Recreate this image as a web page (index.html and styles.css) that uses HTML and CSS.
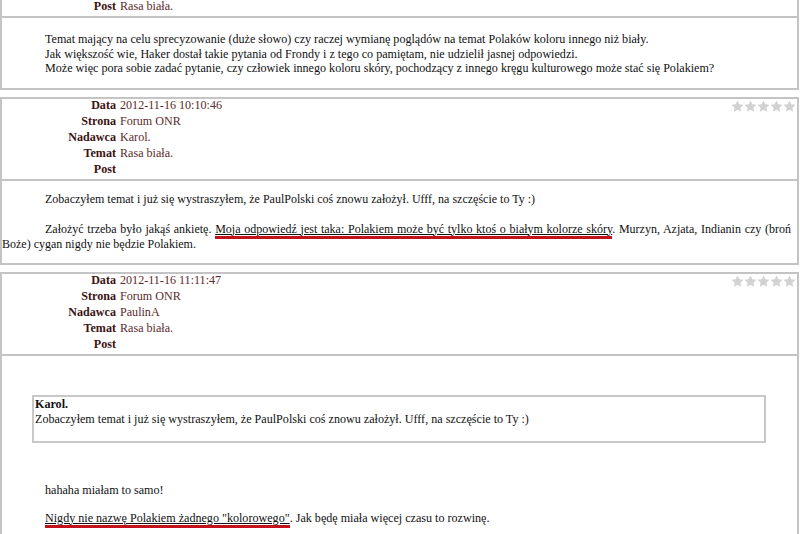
FILE: index.html
```html
<!DOCTYPE html>
<html lang="pl">
<head>
  <meta charset="UTF-8">
  <title>Rasa biała.</title>
  <link rel="stylesheet" href="styles.css">
</head>
<body>
  <div class="post cut">
    <div class="post-head">
      <div class="row"><span class="lbl">Post</span><span class="val">Rasa biała.</span></div>
    </div>
    <div class="post-body plain">
      Temat mający na celu sprecyzowanie (duże słowo) czy raczej wymianę poglądów na temat Polaków koloru innego niż biały.<br>
      Jak większość wie, Haker dostał takie pytania od Frondy i z tego co pamiętam, nie udzielił jasnej odpowiedzi.<br>
      Może więc pora sobie zadać pytanie, czy człowiek innego koloru skóry, pochodzący z innego kręgu kulturowego może stać się Polakiem?
    </div>
  </div>

  <div class="post">
    <div class="post-head">
      <div class="stars">
        <svg viewBox="0 0 13 12"><path d="M6.5 0.5l1.8 3.8 4.2.5-3.1 2.9.8 4.1-3.7-2.1-3.7 2.1.8-4.1L0.5 4.8l4.2-.5z"/></svg>
        <svg viewBox="0 0 13 12"><path d="M6.5 0.5l1.8 3.8 4.2.5-3.1 2.9.8 4.1-3.7-2.1-3.7 2.1.8-4.1L0.5 4.8l4.2-.5z"/></svg>
        <svg viewBox="0 0 13 12"><path d="M6.5 0.5l1.8 3.8 4.2.5-3.1 2.9.8 4.1-3.7-2.1-3.7 2.1.8-4.1L0.5 4.8l4.2-.5z"/></svg>
        <svg viewBox="0 0 13 12"><path d="M6.5 0.5l1.8 3.8 4.2.5-3.1 2.9.8 4.1-3.7-2.1-3.7 2.1.8-4.1L0.5 4.8l4.2-.5z"/></svg>
        <svg viewBox="0 0 13 12"><path d="M6.5 0.5l1.8 3.8 4.2.5-3.1 2.9.8 4.1-3.7-2.1-3.7 2.1.8-4.1L0.5 4.8l4.2-.5z"/></svg>
      </div>
      <div class="row"><span class="lbl">Data</span><span class="val">2012-11-16 10:10:46</span></div>
      <div class="row"><span class="lbl">Strona</span><span class="val">Forum ONR</span></div>
      <div class="row"><span class="lbl">Nadawca</span><span class="val">Karol.</span></div>
      <div class="row"><span class="lbl">Temat</span><span class="val">Rasa biała.</span></div>
      <div class="row"><span class="lbl">Post</span><span class="val"></span></div>
    </div>
    <div class="post-body">
      <p class="indent">Zobaczyłem temat i już się wystraszyłem, że PaulPolski coś znowu założył. Ufff, na szczęście to Ty :)</p>
      <p class="indent">Założyć trzeba było jakąś ankietę. <span class="mark">Moja odpowiedź jest taka: Polakiem może być tylko ktoś o białym kolorze skóry</span>. Murzyn, Azjata, Indianin czy (broń Boże) cygan nigdy nie będzie Polakiem.</p>
    </div>
  </div>

  <div class="post">
    <div class="post-head">
      <div class="stars">
        <svg viewBox="0 0 13 12"><path d="M6.5 0.5l1.8 3.8 4.2.5-3.1 2.9.8 4.1-3.7-2.1-3.7 2.1.8-4.1L0.5 4.8l4.2-.5z"/></svg>
        <svg viewBox="0 0 13 12"><path d="M6.5 0.5l1.8 3.8 4.2.5-3.1 2.9.8 4.1-3.7-2.1-3.7 2.1.8-4.1L0.5 4.8l4.2-.5z"/></svg>
        <svg viewBox="0 0 13 12"><path d="M6.5 0.5l1.8 3.8 4.2.5-3.1 2.9.8 4.1-3.7-2.1-3.7 2.1.8-4.1L0.5 4.8l4.2-.5z"/></svg>
        <svg viewBox="0 0 13 12"><path d="M6.5 0.5l1.8 3.8 4.2.5-3.1 2.9.8 4.1-3.7-2.1-3.7 2.1.8-4.1L0.5 4.8l4.2-.5z"/></svg>
        <svg viewBox="0 0 13 12"><path d="M6.5 0.5l1.8 3.8 4.2.5-3.1 2.9.8 4.1-3.7-2.1-3.7 2.1.8-4.1L0.5 4.8l4.2-.5z"/></svg>
      </div>
      <div class="row"><span class="lbl">Data</span><span class="val">2012-11-16 11:11:47</span></div>
      <div class="row"><span class="lbl">Strona</span><span class="val">Forum ONR</span></div>
      <div class="row"><span class="lbl">Nadawca</span><span class="val">PaulinA</span></div>
      <div class="row"><span class="lbl">Temat</span><span class="val">Rasa biała.</span></div>
      <div class="row"><span class="lbl">Post</span><span class="val"></span></div>
    </div>
    <div class="post-body reply">
      <div class="quote">
        <b>Karol.</b><br>
        Zobaczyłem temat i już się wystraszyłem, że PaulPolski coś znowu założył. Ufff, na szczęście to Ty :)
      </div>
      <div class="answer">
        <div>hahaha miałam to samo!</div>
        <div class="gap"><span class="mark">Nigdy nie nazwę Polakiem żadnego "kolorowego"</span>. Jak będę miała więcej czasu to rozwinę.</div>
      </div>
    </div>
  </div>
</body>
</html>
```

FILE: styles.css
```css
* { box-sizing: border-box; }

body {
  margin: 0;
  padding: 0 1px 0 0;
  background: #fff;
  font-family: 'Liberation Serif', 'Times New Roman', serif;
  font-size: 12.1px;
  color: #111;
}

/* One forum post */
.post {
  border: 2px solid #c4c4c4;
  margin-bottom: 7px;
  background: #fff;
}

.post.cut { border-top: 0; }

.post-head {
  position: relative;
  border-bottom: 2px solid #c4c4c4;
}

.row {
  display: flex;
  gap: 4px;
  height: 16px;
  line-height: 13px;
}

.lbl {
  width: 114px;
  text-align: right;
  font-weight: bold;
  color: #3c1212;
}

.val { color: #5e2a2a; }

.stars {
  position: absolute;
  top: 1px;
  right: 1px;
  display: flex;
}

.stars svg { width: 13px; height: 12px; fill: #d2d2d2; }

/* Post text */
.post-body {
  padding: 11px 6px 11px 0;
  line-height: 15px;
}

.post-body.plain { padding: 14px 10px 12px 43px; line-height: 14.5px; }

.post-body p { margin: 0 0 15px; font-size: 12px; text-align: justify; }
.post-body p:last-child { margin-bottom: 0; }
.post-body p.indent { text-indent: 43px; }

.mark {
  text-decoration: underline;
  border-bottom: 3px solid #c3121c;
}

/* Reply with quote */
.post-body.reply { padding: 39px 0 20px; }

.quote {
  margin: 0 31px 0 30px;
  border: 2px solid #c8c8c8;
  padding: 0 1px 14px;
  line-height: 15px;
}

.answer {
  padding: 40px 0 0 43px;
  line-height: 14px;
}

.answer .gap { margin-top: 14px; }
```
